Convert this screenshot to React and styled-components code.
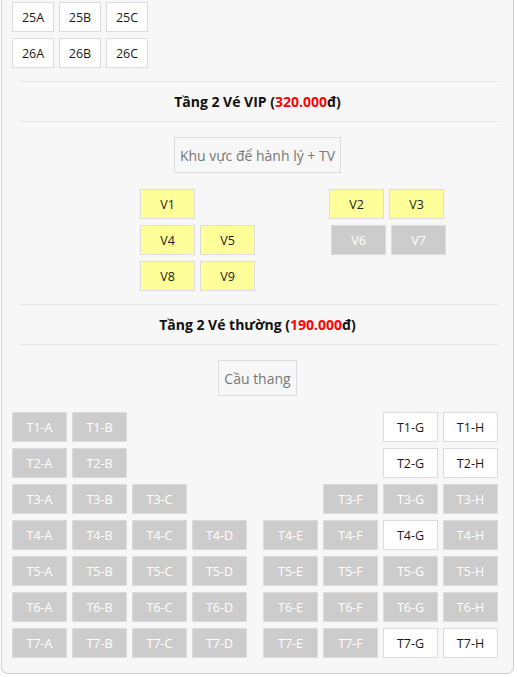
import styled, { createGlobalStyle } from "styled-components";

const GlobalStyles = createGlobalStyle`
    html,
    body {
        margin: 0;
        background: #fff;
        font-family: "Open Sans", "Noto Sans", sans-serif;
    }
`;

const Panel = styled.div`
    width: 513px;
    margin-left: 1px;
    box-sizing: border-box;
    background-color: #f7f7f7;
    border: 1px solid #cfcfcf;
    border-top: none;
    border-radius: 0 0 7px 7px;
    padding: 2px 0 15px;
`;

const SeatBlock = styled.div`
    display: flex;
    flex-direction: column;
    gap: 6px;
    padding: 0 15px 0 10px;
`;

const Row = styled.div`
    display: flex;
    justify-content: ${props => props.$split ? "space-between" : "flex-start"};
    gap: 5px;
`;

const Group = styled.div`
    display: flex;
    gap: 5px;
    justify-content: ${props => props.$right ? "flex-end" : "flex-start"};
`;

const Seat = styled.div`
    width: ${props => props.$narrow ? "42px" : "55px"};
    height: 30px;
    box-sizing: border-box;
    display: flex;
    align-items: center;
    justify-content: center;
    font-size: 12.5px;
    border: 1px solid #dcdcdc;
    background-color: ${props =>
        props.$kind === "sold" ? "#cccccc" : props.$kind === "vip" ? "#ffff99" : "#ffffff"};
    color: ${props => props.$kind === "sold" ? "#ffffff" : "#1a1a1a"};
    margin-left: ${props => props.$shift ? "2px" : "0"};
    margin-right: ${props => props.$shift ? "-2px" : "0"};
`;

const Divider = styled.hr`
    border: none;
    border-top: 1px solid #e6e6e6;
    margin: ${props => props.$top}px 15px 0 18px;
`;

const Title = styled.div`
    height: 39px;
    display: flex;
    align-items: center;
    justify-content: center;
    font-size: 14px;
    font-weight: bold;
    color: #111;
`;

const Price = styled.span`
    color: #ff0000;
`;

const Area = styled.div`
    display: flex;
    justify-content: center;
    margin-top: 15px;
`;

const AreaBox = styled.div`
    height: 36px;
    box-sizing: border-box;
    display: flex;
    align-items: center;
    padding: 0 5px;
    border: 1px solid #dcdcdc;
    font-size: 14px;
    color: #777;
`;

const VipGrid = styled.div`
    display: grid;
    grid-template-columns: 55px 55px 64px 55px 55px;
    column-gap: 5px;
    row-gap: 6px;
    padding-left: 138px;
    margin-top: 16px;
`;

const Cell = styled.div`
    grid-column: ${props => props.$col};
    grid-row: ${props => props.$row};
`;

const NormalBlock = styled(SeatBlock)`
    margin-top: 16px;
`;

const vipSeats = [
    { name: "V1", col: 1, row: 1 },
    { name: "V2", col: 4, row: 1 },
    { name: "V3", col: 5, row: 1 },
    { name: "V4", col: 1, row: 2 },
    { name: "V5", col: 2, row: 2 },
    { name: "V6", col: 4, row: 2, sold: true },
    { name: "V7", col: 5, row: 2, sold: true },
    { name: "V8", col: 1, row: 3 },
    { name: "V9", col: 2, row: 3 },
];

// left: seats A-D, right: seats E-H ; "s" = sold, "o" = open
const normalRows = [
    { n: 1, left: "ss", right: "oo" },
    { n: 2, left: "ss", right: "oo" },
    { n: 3, left: "sss", right: "sss" },
    { n: 4, left: "ssss", right: "ssos" },
    { n: 5, left: "ssss", right: "ssss" },
    { n: 6, left: "ssss", right: "ssss" },
    { n: 7, left: "ssss", right: "ssoo" },
];

function rightLetters(count) {
    return ["E", "F", "G", "H"].slice(4 - count);
}

export default function App() {
    return (
        <>
            <GlobalStyles />
            <Panel>
                <SeatBlock>
                    {[25, 26].map(num => (
                        <Row key={num}>
                            {["A", "B", "C"].map(l => (
                                <Seat key={l} $narrow>{num}{l}</Seat>
                            ))}
                        </Row>
                    ))}
                </SeatBlock>

                <Divider $top={13} />
                <Title>Tầng 2 Vé VIP (<Price>320.000</Price>đ)</Title>
                <Divider $top={0} />

                <Area>
                    <AreaBox>Khu vực để hành lý + TV</AreaBox>
                </Area>

                <VipGrid>
                    {vipSeats.map(seat => (
                        <Cell key={seat.name} $col={seat.col} $row={seat.row}>
                            <Seat $kind={seat.sold ? "sold" : "vip"} $shift={seat.sold}>{seat.name}</Seat>
                        </Cell>
                    ))}
                </VipGrid>

                <Divider $top={13} />
                <Title>Tầng 2 Vé thường (<Price>190.000</Price>đ)</Title>
                <Divider $top={0} />

                <Area>
                    <AreaBox>Cầu thang</AreaBox>
                </Area>

                <NormalBlock>
                    {normalRows.map(row => (
                        <Row key={row.n} $split>
                            <Group>
                                {row.left.split("").map((k, i) => (
                                    <Seat key={i} $kind={k === "s" ? "sold" : "open"}>
                                        T{row.n}-{"ABCD"[i]}
                                    </Seat>
                                ))}
                            </Group>
                            <Group $right>
                                {row.right.split("").map((k, i) => (
                                    <Seat key={i} $kind={k === "s" ? "sold" : "open"}>
                                        T{row.n}-{rightLetters(row.right.length)[i]}
                                    </Seat>
                                ))}
                            </Group>
                        </Row>
                    ))}
                </NormalBlock>
            </Panel>
        </>
    );
}
